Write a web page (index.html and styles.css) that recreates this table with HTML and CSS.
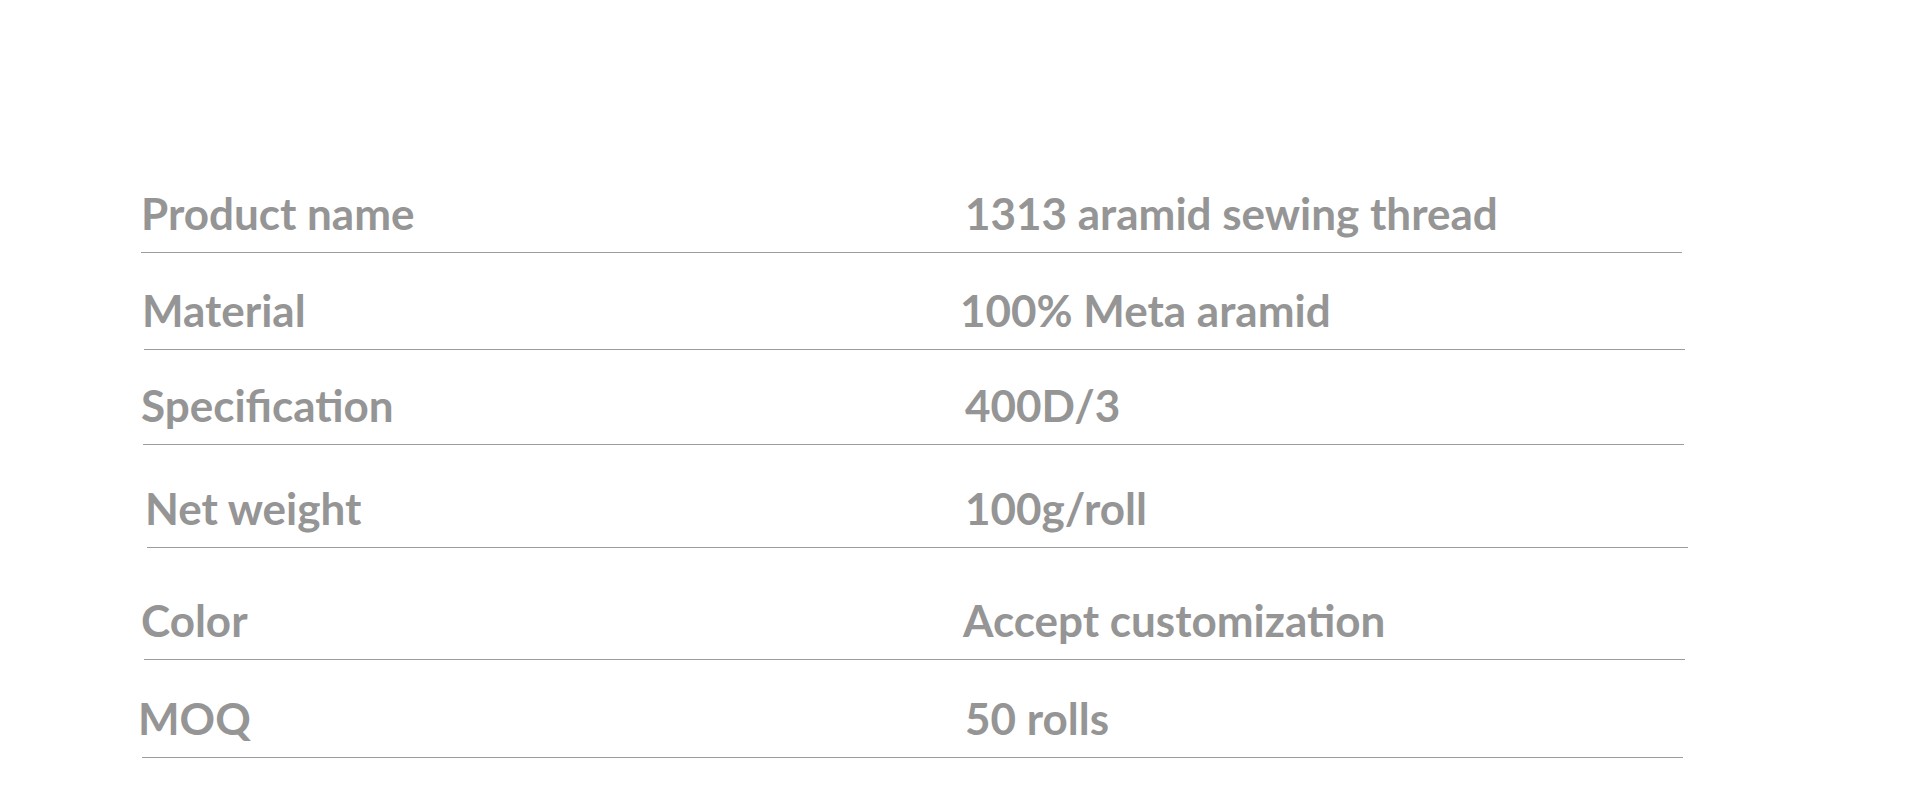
FILE: index.html
```html
<!DOCTYPE html>
<html lang="en">
<head>
<meta charset="utf-8">
<title>1313 aramid sewing thread</title>
<link rel="stylesheet" href="styles.css">
</head>
<body>
<div class="spec">
  <div class="row r1"><div class="label">Product name</div><div class="value">1313 aramid sewing thread</div></div>
  <div class="row r2"><div class="label">Material</div><div class="value">100% Meta aramid</div></div>
  <div class="row r3"><div class="label">Specification</div><div class="value">400D/3</div></div>
  <div class="row r4"><div class="label">Net weight</div><div class="value">100g/roll</div></div>
  <div class="row r5"><div class="label">Color</div><div class="value">Accept customization</div></div>
  <div class="row r6"><div class="label">MOQ</div><div class="value">50 rolls</div></div>
</div>
</body>
</html>
```

FILE: styles.css
```css
html, body {
  margin: 0;
  padding: 0;
  background: #ffffff;
}

.spec {
  padding: 156px 0 0 141px;
  font-family: "Lato", "Noto Sans", sans-serif;
  font-weight: 700;
  color: #959595;
}

.row {
  box-sizing: border-box;
  width: 1541px;
  display: flex;
  align-items: flex-end;
  padding-bottom: 12px;
  border-bottom: 1px solid #9c9c9c;
  font-size: 44px;
  line-height: 1.2;
}

.label {
  box-sizing: border-box;
  width: 822px;
  flex: none;
}

.value {
  flex: 1;
}

/* per-row geometry of the original table */
.r1 { height: 97px; }
.r1 .value { margin-left: 2px; }

.r2 { height: 97px; margin-left: 3px; }
.r2 .label { margin-left: -2px; }
.r2 .value { margin-left: -4px; }

.r3 { height: 95px; margin-left: 2px; }
.r3 .label { margin-left: -2px; }
.r3 .value { margin-left: 2px; }

.r4 { height: 103px; margin-left: 6px; }
.r4 .label { margin-left: -2px; }
.r4 .value { margin-left: -2px; }

.r5 { height: 112px; margin-left: 3px; }
.r5 .label { margin-left: -3px; }
.r5 .value { margin-left: 0; }

.r6 { height: 98px; margin-left: 1px; }
.r6 .label { margin-left: -4px; }
.r6 .value { margin-left: 5px; }
```
